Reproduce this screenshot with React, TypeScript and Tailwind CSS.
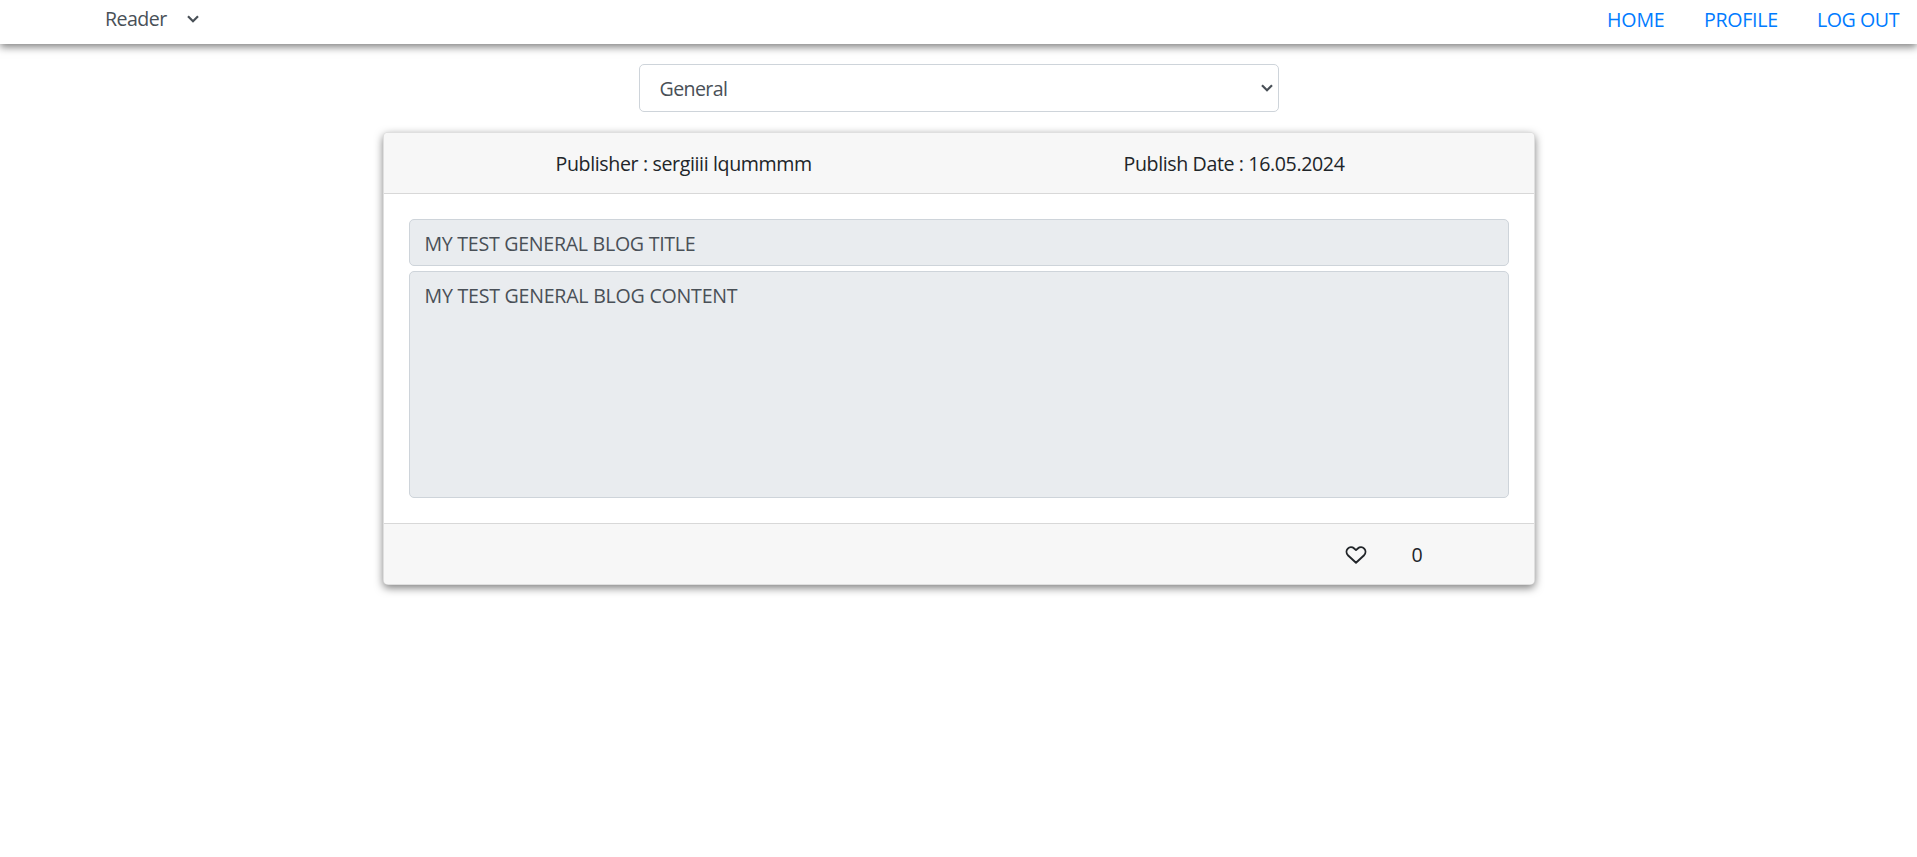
type IconProps = { className?: string };

function Chevron({ className }: IconProps) {
  return (
    <svg className={className} width="12" height="8" viewBox="0 0 12 8" fill="none" stroke="#495057" strokeWidth="2.2">
      <path d="M1 1.2 6 6.2 11 1.2" />
    </svg>
  );
}

function Heart({ className }: IconProps) {
  return (
    <svg className={className} width="22" height="18" viewBox="0 0 22 18" fill="none" stroke="#212529" strokeWidth="1.9" strokeLinejoin="round">
      <path d="M11 16.7 2.9 9.2C1.1 7.3 1.1 4.4 2.8 2.6 4.5 .9 7.3 .9 9.2 2.5L11 4.1 12.8 2.5C14.7 .9 17.5 .9 19.2 2.6 20.9 4.4 20.9 7.3 19.1 9.2Z" />
    </svg>
  );
}

export default function App() {
  return (
    <div className="min-h-[857px] overflow-hidden bg-white font-['Open_Sans',sans-serif] text-[19.6px] leading-[30px] text-[#212529]">
      <nav className="flex h-11 items-start justify-between bg-white pl-[105px] pr-4 shadow-[0_3px_8px_rgba(0,0,0,0.5)]">
        <button className="flex items-start pt-1 text-[#495057]">
          <span className="w-[82px] text-left tracking-[-0.55px]">Reader</span>
          <Chevron className="mt-[11px]" />
        </button>
        <div className="flex pt-[5px] text-[#007bff]">
          <a className="w-[97px] tracking-[-0.15px]">HOME</a>
          <a className="w-[113px] tracking-[-0.3px]">PROFILE</a>
          <a className="w-[84px] whitespace-nowrap tracking-[-0.45px]">LOG OUT</a>
        </div>
      </nav>

      <main className="flex flex-col items-center pt-5">
        <button className="flex h-12 w-[640px] items-center justify-between rounded-[5px] border border-[#ced4da] bg-white pl-5 pr-[5px] text-[#495057]">
          <span className="pt-[2px] tracking-[-0.6px]">General</span>
          <Chevron />
        </button>

        <article className="mt-5 flex h-[453px] w-[1152px] flex-col rounded-[5px] border border-black/[0.125] bg-white shadow-[0_3px_8px_rgba(0,0,0,0.5)]">
          <header className="flex h-[61px] shrink-0 rounded-t-[4px] border-b border-black/[0.125] bg-[#f7f7f7] pt-4">
            <span className="w-[569px] pl-[172px] tracking-[-0.37px]">Publisher : sergiiii lqummmm</span>
            <span className="pl-[171px] tracking-[-0.38px]">Publish Date : 16.05.2024</span>
          </header>
          <div className="flex flex-1 flex-col gap-[5px] p-[25px] text-[#495057]">
            <div className="h-[47px] shrink-0 rounded-[5px] border border-[#ced4da] bg-[#e9ecef] pl-[15px] pt-[9px] tracking-[-0.28px]">MY TEST GENERAL BLOG TITLE</div>
            <div className="flex-1 rounded-[5px] border border-[#ced4da] bg-[#e9ecef] pl-[15px] pt-[9px] tracking-[-0.24px]">MY TEST GENERAL BLOG CONTENT</div>
          </div>
          <footer className="flex h-[61px] shrink-0 items-start rounded-b-[4px] border-t border-black/[0.125] bg-[#f7f7f7] pl-[961px] pt-4">
            <Heart className="mt-[6px]" />
            <span className="pl-[45px]">0</span>
          </footer>
        </article>
      </main>
    </div>
  );
}
